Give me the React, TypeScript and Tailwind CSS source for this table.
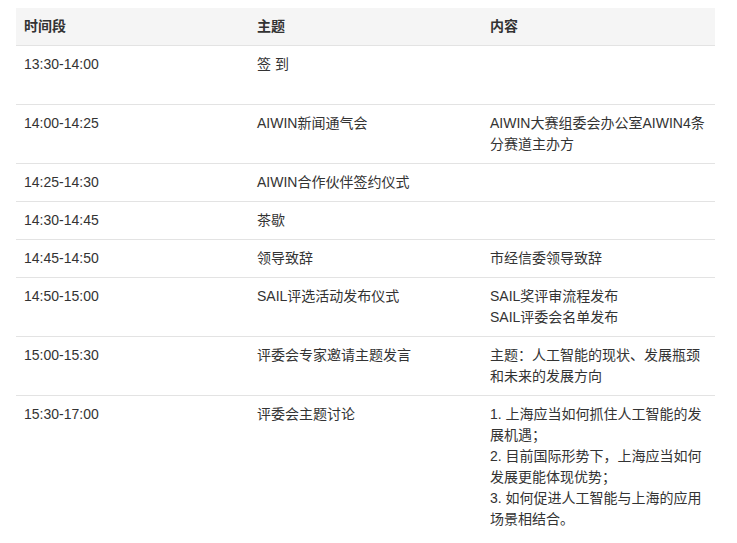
const rows: { time: string; topic: string; content: string[] }[] = [
  { time: "13:30-14:00", topic: "签 到", content: ["\u00a0", "\u00a0"] },
  { time: "14:00-14:25", topic: "AIWIN新闻通气会", content: ["AIWIN大赛组委会办公室AIWIN4条分赛道主办方"] },
  { time: "14:25-14:30", topic: "AIWIN合作伙伴签约仪式", content: [] },
  { time: "14:30-14:45", topic: "茶歇", content: [] },
  { time: "14:45-14:50", topic: "领导致辞", content: ["市经信委领导致辞"] },
  { time: "14:50-15:00", topic: "SAIL评选活动发布仪式", content: ["SAIL奖评审流程发布", "SAIL评委会名单发布"] },
  { time: "15:00-15:30", topic: "评委会专家邀请主题发言", content: ["主题：人工智能的现状、发展瓶颈和未来的发展方向"] },
  {
    time: "15:30-17:00",
    topic: "评委会主题讨论",
    content: [
      "1. 上海应当如何抓住人工智能的发展机遇；",
      "2. 目前国际形势下，上海应当如何发展更能体现优势；",
      "3. 如何促进人工智能与上海的应用场景相结合。",
    ],
  },
];

export default function App() {
  return (
    <div className="min-h-screen bg-white pt-2 pl-4 font-['Liberation_Sans','Noto_Sans_CJK_SC',sans-serif] text-[14px] leading-[21px] text-[#333]">
      <table className="w-[699px] table-fixed border-collapse">
        <thead>
          <tr className="bg-[#f5f5f5] border-b border-[#e3e3e3]">
            <th className="w-[233px] px-2 py-2 text-left font-bold">时间段</th>
            <th className="w-[233px] px-2 py-2 text-left font-bold">主题</th>
            <th className="w-[233px] px-2 py-2 text-left font-bold">内容</th>
          </tr>
        </thead>
        <tbody>
          {rows.map((r) => (
            <tr key={r.time} className="border-b border-[#e3e3e3] last:border-b-0 align-top">
              <td className="px-2 py-2">{r.time}</td>
              <td className="px-2 py-2">{r.topic}</td>
              <td className="px-2 py-2">
                {r.content.map((c, i) => (
                  <div key={i}>{c}</div>
                ))}
              </td>
            </tr>
          ))}
        </tbody>
      </table>
    </div>
  );
}
